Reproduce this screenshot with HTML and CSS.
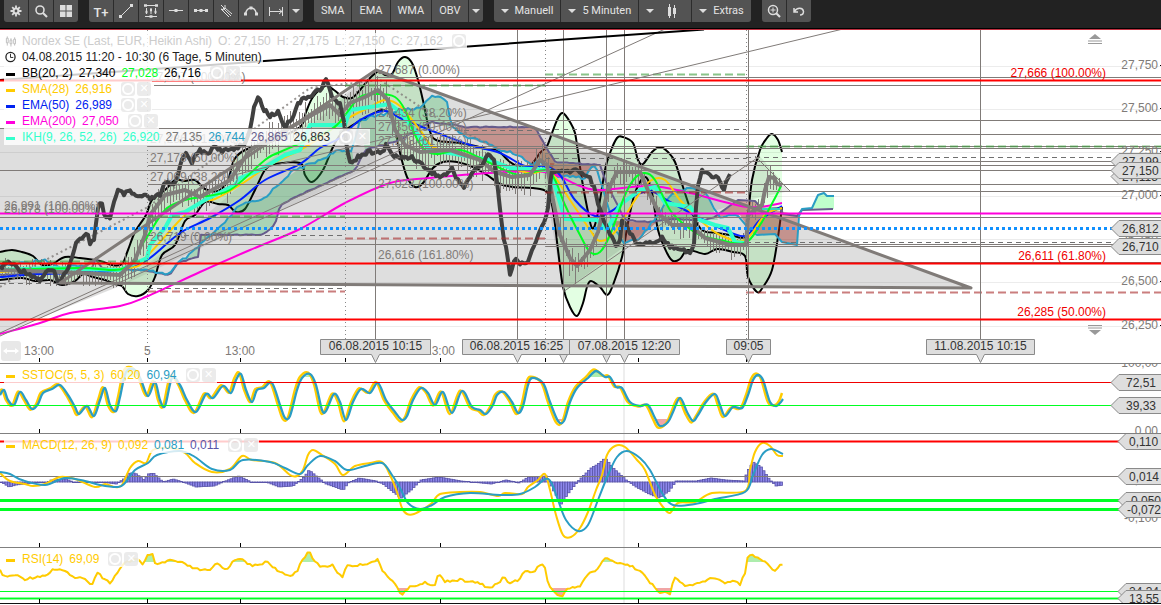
FILE: index.html
```html
<!DOCTYPE html>
<html lang="de">
<head>
<meta charset="utf-8">
<title>Nordex SE – Chart</title>
<link rel="stylesheet" href="styles.css">
</head>
<body>
<header class="toolbar">
  <div class="group">
    <button class="tool" aria-label="Einstellungen"><svg class="ico" viewBox="0 0 14 14"><g stroke="#ddd" stroke-width="1.800"><path d="M7 1.500v11M1.500 7h11M3.200 3.200l7.600 7.600M10.800 3.200l-7.600 7.600"/></g><circle cx="7" cy="7" r="3.500" fill="#ddd"/><circle cx="7" cy="7" r="1.400" fill="#505050"/></svg></button>
    <button class="tool" aria-label="Suche"><svg class="ico" viewBox="0 0 14 14" fill="none" stroke="#ddd"><circle cx="6" cy="6" r="4" stroke-width="1.600"/><path d="M9 9l4 4" stroke-width="2.200"/></svg></button>
    <button class="tool" aria-label="Layout"><svg class="ico" viewBox="0 0 14 14" fill="#ddd"><path d="M1 1h5.500v5.500H1zM7.500 1H13v5.500H7.500zM1 7.500h5.500V13H1zM7.500 7.500H13V13H7.500z"/></svg></button>
  </div>
  <div class="group">
    <button class="tool text-tool" aria-label="Text einfügen">T+</button>
    <button class="tool" aria-label="Linie"><svg class="ico" viewBox="0 0 14 14"><path d="M2 12L12 2" stroke="#ddd"/><path d="M0 11h3v3H0zM11 0h3v3h-3z" fill="#ddd"/></svg></button>
    <button class="tool" aria-label="Fibonacci"><svg class="ico" viewBox="0 0 14 14" stroke="#ddd" fill="none"><path d="M1 1.500h12M1 12.500h12M2.500 4v6M7 4v6M11.500 4v6"/><path d="M1.500 8h2M6 6h2M10.500 8h2M0 1.500h3M11 1.500h3M5.500 12.500h3" stroke-width="2.400"/></svg></button>
    <button class="tool" aria-label="Horizontale"><svg class="ico" viewBox="0 0 14 14"><path d="M0 6.500h14" stroke="#ddd"/><path d="M5.500 5h3v3h-3z" fill="#ddd"/></svg></button>
    <button class="tool" aria-label="Strahl"><svg class="ico" viewBox="0 0 14 14"><path d="M0 6.500h14" stroke="#ddd"/><path d="M0 5h3v3H0zM5.500 5h3v3h-3zM11 5h3v3h-3z" fill="#ddd"/></svg></button>
    <button class="tool" aria-label="Fächer"><svg class="ico" viewBox="0 0 14 14" stroke="#ddd" fill="none"><path d="M2 1l4 4M2 5l3 1M6 1v4M2 5l8 8M4 4l8 8M6 4l7 6"/></svg></button>
    <button class="tool" aria-label="Bogen"><svg class="ico" viewBox="0 0 14 14"><path d="M1.500 10C3 2 11 2 12.500 10" stroke="#ddd" stroke-width="1.500" fill="none"/><path d="M0 8.500h3v3H0zM5.500 2.500h3v3h-3zM11 8.500h3v3h-3z" fill="#ddd"/></svg></button>
    <button class="tool" aria-label="Messen"><svg class="ico" viewBox="0 0 14 14" stroke="#ddd" fill="none"><path d="M.5 3v9M13.500 3v9M1 7.500h12M10 5l3 2.500L10 10"/></svg></button>
    <button class="tool slim" aria-label="Weitere Werkzeuge"><span class="caret"></span></button>
  </div>
  <div class="group">
    <button class="tool word">SMA</button>
    <button class="tool word">EMA</button>
    <button class="tool word">WMA</button>
    <button class="tool word">OBV</button>
    <button class="tool slim" aria-label="Weitere Indikatoren"><span class="caret"></span></button>
  </div>
  <div class="group">
    <button class="tool menu" aria-haspopup="true"><span class="caret"></span>Manuell</button>
    <button class="tool menu" aria-haspopup="true"><span class="caret"></span>5 Minuten</button>
    <button class="tool menu" aria-haspopup="true" aria-label="Darstellung"><span class="caret"></span><svg class="ico wide" viewBox="0 0 24 14"><path d="M9.500 0v14M14.500 1v13" stroke="#ddd"/><path d="M8 3h3v9H8zM13 4h3v6h-3z" fill="#ddd"/></svg></button>
    <button class="tool menu" aria-haspopup="true"><span class="caret"></span>Extras</button>
  </div>
  <div class="group">
    <button class="tool" aria-label="Zoom"><svg class="ico" viewBox="0 0 14 14" fill="none" stroke="#ddd"><circle cx="6" cy="6" r="4.500" stroke-width="1.500"/><path d="M9 9l4 4" stroke-width="2.200"/><path d="M3.500 6h5M6 3.500v5"/></svg></button>
    <button class="tool" aria-label="Rückgängig"><svg class="ico" viewBox="0 0 14 14" fill="none" stroke="#ddd" stroke-width="1.500"><path d="M2 4v4h4M2.500 7.500C5 3 11 3.500 11.500 7.500c0 2-1.500 3.500-3.500 3.500"/></svg></button>
  </div>
</header>

<main class="charts">
  <section class="panel price" aria-label="Kurs">
    <svg class="plot"><g id="price" transform="translate(0,-29)"></g></svg>
    <svg class="axis"><g id="priceAxis" transform="translate(-1001,-29)"></g></svg>
    <div class="legend">
      <div class="row faded">
        <svg class="mark" viewBox="0 0 12 12" stroke="#bbb" fill="#fff"><path d="M2.500 1v10M6.500 3v9M10.500 2v9"/><path d="M1.500 3h2v5h-2zM5.500 5h2v4h-2zM9.500 4h2v5h-2z"/></svg>
        <span>Nordex SE (Last, EUR, Heikin Ashi)</span><span>O: 27,150</span><span>H: 27,175</span><span>L: 27,150</span><span>C: 27,162</span>
        <span class="acts"><button class="act opt" aria-label="Optionen"></button></span>
      </div>
      <div class="row">
        <svg class="mark" viewBox="0 0 12 12" stroke="#222" fill="none"><circle cx="6" cy="6" r="5" stroke-width="1.400"/><path d="M6 2.500V6.500h3"/></svg>
        <span>04.08.2015 11:20 - 10:30 (6 Tage, 5 Minuten)</span>
      </div>
      <div class="row black"><i class="dash"></i><span>BB(20, 2)</span><span>27,340</span><span class="lime">27,028</span><span>26,716</span><span class="acts"><button class="act opt" aria-label="Optionen"></button><button class="act del" aria-label="Entfernen"></button></span></div>
      <div class="row yellow"><i class="dash"></i><span>SMA(28)</span><span>26,916</span><span class="acts"><button class="act opt" aria-label="Optionen"></button><button class="act del" aria-label="Entfernen"></button></span></div>
      <div class="row blue"><i class="dash"></i><span>EMA(50)</span><span>26,989</span><span class="acts"><button class="act opt" aria-label="Optionen"></button><button class="act del" aria-label="Entfernen"></button></span></div>
      <div class="row pink"><i class="dash"></i><span>EMA(200)</span><span>27,050</span><span class="acts"><button class="act opt" aria-label="Optionen"></button><button class="act del" aria-label="Entfernen"></button></span></div>
      <div class="row aqua"><i class="dash"></i><span>IKH(9, 26, 52, 26)</span><span>26,920</span><span class="gray">27,135</span><span class="teal">26,744</span><span class="plum">26,865</span><span class="dark">26,863</span><span class="acts"><button class="act opt" aria-label="Optionen"></button><button class="act del" aria-label="Entfernen"></button></span></div>
    </div>
    <button class="scroll up" aria-label="Nach oben"><svg viewBox="0 0 14 10"><path d="M7 0l6 5H1z" fill="#999"/><path d="M0 7h14M0 9.500h14" stroke="#999"/></svg></button>
    <button class="scroll down" aria-label="Nach unten"><svg viewBox="0 0 14 10"><path d="M7 10l6-5H1z" fill="#999"/><path d="M0 .5h14M0 3h14" stroke="#999"/></svg></button>
    <button class="fit" aria-label="Breite anpassen"><svg viewBox="0 0 20 20"><path d="M2 10l4-3v2h8V7l4 3-4 3v-2H6v2z" fill="#fff"/></svg></button>
  </section>
  <section class="panel stoch" aria-label="Stochastik">
    <svg class="plot"><g id="stoch" transform="translate(0,-364)"></g></svg>
    <svg class="axis"><g id="stochAxis" transform="translate(-1001,-364)"></g></svg>
    <div class="legend"><div class="row yellow"><i class="dash"></i><span>SSTOC(5, 5, 3)</span><span>60,20</span><span class="teal">60,94</span><span class="acts"><button class="act opt" aria-label="Optionen"></button><button class="act del" aria-label="Entfernen"></button></span></div></div>
  </section>
  <section class="panel macd" aria-label="MACD">
    <svg class="plot"><g id="macd" transform="translate(0,-434)"></g></svg>
    <svg class="axis"><g id="macdAxis" transform="translate(-1001,-434)"></g></svg>
    <div class="legend"><div class="row yellow"><i class="dash"></i><span>MACD(12, 26, 9)</span><span>0,092</span><span class="teal">0,081</span><span class="violet">0,011</span><span class="acts"><button class="act opt" aria-label="Optionen"></button><button class="act del" aria-label="Entfernen"></button></span></div></div>
  </section>
  <section class="panel rsi" aria-label="RSI">
    <svg class="plot"><g id="rsi" transform="translate(0,-548)"></g></svg>
    <svg class="axis"><g id="rsiAxis" transform="translate(-1001,-548)"></g></svg>
    <div class="legend"><div class="row yellow"><i class="dash"></i><span>RSI(14)</span><span>69,09</span><span class="acts"><button class="act opt" aria-label="Optionen"></button><button class="act del" aria-label="Entfernen"></button></span></div></div>
  </section>
</main>
<script src="chart.js"></script>
</body>
</html>
```
FILE: styles.css
```css
* { box-sizing: border-box; }
body {
  margin: 0;
  background: #fff;
  font-family: "Liberation Sans", Arial, sans-serif;
  font-size: 12px;
  color: #222;
  overflow: hidden;
}
button { font: inherit; border: 0; padding: 0; margin: 0; cursor: pointer; }

.toolbar {
  display: flex;
  gap: 11px;
  height: 29px;
  padding: 0 4px;
  background: #222;
  border-bottom: 1px solid #000;
}
.group {
  display: flex;
  gap: 1px;
  height: 22px;
  border-radius: 0 0 3px 3px;
  overflow: hidden;
  background: #2c2c2c;
}
.tool {
  display: flex;
  align-items: center;
  justify-content: center;
  width: 24px;
  height: 22px;
  background: #535353;
  color: #e4e4e4;
  font-family: Roboto, "Liberation Sans", sans-serif;
  font-size: 11px;
  line-height: 20px;
}
.text-tool { font-size: 13px; font-weight: 500; padding-top: 3px; }
.slim { width: 14px; }
.word { width: auto; padding: 0 7px; }
.menu { width: auto; gap: 6px; padding: 0 7px; }
.ico { width: 14px; height: 14px; }
.ico.wide { width: 24px; }
.caret {
  border: 4px solid transparent;
  border-top-color: #ddd;
  border-bottom: 0;
}

.charts { display: flex; flex-direction: column; }
.panel {
  position: relative;
  border-bottom: 1px solid #808080;
  overflow: hidden;
}
.price { height: 335px; }
.stoch { height: 70px; }
.macd { height: 114px; }
.rsi { height: 56px; border-bottom: 1px solid #111; }
.plot { display: block; width: 100%; height: 100%; }
.axis { position: absolute; top: 0; right: 0; width: 160px; height: 100%; }

.legend {
  position: absolute;
  top: 4px;
  left: 4px;
  display: flex;
  flex-direction: column;
  align-items: flex-start;
}
.row {
  display: flex;
  align-items: center;
  gap: 6px;
  height: 16px;
  padding: 0 1px;
  line-height: 16px;
  white-space: nowrap;
  background: rgba(255, 255, 255, .8);
}
.mark, .dash { width: 11px; flex: none; }
.mark { height: 12px; }
.dash::before { content: ""; display: block; width: 9px; height: 3px; margin-left: 1px; margin-top: 2px; background: currentColor; }
.acts { display: flex; gap: 2px; padding-left: 3px; }
.act {
  width: 14px;
  height: 14px;
  border-radius: 3px;
  background: rgba(222, 222, 222, .6);
  display: grid;
  place-items: center;
  color: #fff;
}
.opt::before { content: ""; width: 8px; height: 8px; border: 2px solid #fff; border-radius: 50%; }
.del::before { content: "✕"; font: bold 11px/14px "DejaVu Sans", sans-serif; }
.stoch .legend, .macd .legend, .rsi .legend { top: 3px; }
.faded { color: #ccc; }
.black { color: #000; }
.lime { color: #0f2; }
.yellow { color: #ffcb00; }
.blue { color: #0022f0; }
.pink { color: #ff00dc; }
.aqua { color: #33ffcc; }
.gray { color: #777; }
.teal { color: #2a9dc4; }
.plum { color: #665c8c; }
.violet { color: #5954a8; }
.dark { color: #333; }

.scroll { position: absolute; right: 59px; width: 14px; height: 10px; background: none; }
.scroll svg, .fit svg { display: block; width: 100%; height: 100%; }
.up { top: 5px; }
.down { top: 296px; }
.fit { position: absolute; left: 1px; bottom: 2px; width: 20px; height: 20px; border-radius: 3px; background: #e8e8e8; }

svg text { font-family: "Liberation Sans", Arial, sans-serif; font-size: 12px; fill: #807b78; }
svg .tag { fill: #333; }
svg .fib { fill: #f00000; text-anchor: end; }
svg .num { text-anchor: end; }
```
FILE: chart.js
```js
const NS = 'http://www.w3.org/2000/svg';
const FAR = 4000;
const GREY = '#807b78';
let host;

function into(id) { host = document.getElementById(id); }
function add(tag, attrs, text) {
  const e = document.createElementNS(NS, tag);
  for (const k in attrs) e.setAttribute(k, attrs[k]);
  if (text) e.textContent = text;
  host.appendChild(e);
  return e;
}
function pts(s) {
  const n = s.trim().split(/[\s,]+/).map(Number), out = [];
  for (let i = 0; i < n.length; i += 2) out.push([n[i], n[i + 1]]);
  return out;
}
function curve(p) {
  let d = 'M' + p[0];
  for (let i = 0; i < p.length - 1; i++) {
    const a = p[i - 1] || p[i], b = p[i], c = p[i + 1], e = p[i + 2] || c;
    d += `C${b[0] + (c[0] - a[0]) / 6},${b[1] + (c[1] - a[1]) / 6} ${c[0] - (e[0] - b[0]) / 6},${c[1] - (e[1] - b[1]) / 6} ${c[0]},${c[1]}`;
  }
  return d;
}
function at(p, x) {
  for (let i = 1; i < p.length; i++) {
    if (x <= p[i][0]) {
      const [x0, y0] = p[i - 1], [x1, y1] = p[i];
      return y0 + (y1 - y0) * (x - x0) / ((x1 - x0) || 1);
    }
  }
  return p[p.length - 1][1];
}
function noise(i) { const v = Math.sin(i * 12.9898) * 43758.5453; return v - Math.floor(v); }
function rough(p, step, amp) {
  const out = [];
  for (let x = p[0][0], i = 0; x <= p[p.length - 1][0]; x += step, i++) out.push([x, at(p, x) + (noise(i) - 0.5) * amp]);
  return out;
}
function line(x1, y1, x2, y2, color, w, dash, op) {
  const a = { x1, y1, x2, y2, stroke: color, 'stroke-width': w || 1 };
  if (dash) a['stroke-dasharray'] = dash;
  if (op) a['stroke-opacity'] = op;
  return add('line', a);
}
function stroke(d, color, w, op, dash) {
  const a = { d, fill: 'none', stroke: color, 'stroke-width': w, 'stroke-linejoin': 'round', 'stroke-opacity': op || 1 };
  if (dash) a['stroke-dasharray'] = dash;
  return add('path', a);
}
function area(s, fill) { add('polygon', { points: s, fill }); }
function label(x, y, t, c) { add('text', { x, y, class: c || '' }, t); }
function halo(y, color) { line(0, y, FAR, y, color, 3, null, 0.5); line(0, y, FAR, y, color, 1); }
function flag(x, y, t, pad) {
  add('path', { d: `M${x},${y}l8,-8H1170v16H${x + 8}z`, fill: '#dedede', stroke: '#8a8a8a', 'stroke-width': 1 });
  label(x + (pad || 11), y + 4, t, 'tag');
}
const TICKS = [39.5, 147.5, 240.5, 345.5, 440.5, 545.5, 638.5, 746.5];
function ticks(y) { TICKS.forEach(x => line(x, y - 4, x, y, '#000')); }

/* price panel */
into('price');
[66, 109, 152, 196, 239, 282, 326].forEach(y => line(0, y + .5, FAR, y + .5, '#ececec'));
area('0,128 300,128 376,70 971,288 125,284 0,334', 'rgba(60,60,60,.17)');
area('540,153 757,153 790,191 748,200 640,235 563,292', 'rgba(60,60,60,.12)');
area('125,284 376,70 376,165', 'rgba(60,60,60,.10)');

const upper = pts('0,252 12,250 22,252 33,256 42,265 52,264 65,257 80,258 100,261 112,265 122,264 128,250 135,232 146,215 152,200 165,190 175,180 185,181 195,180 205,189 218,191 228,180 234,160 245,150 270,142 300,127 306,112 313,97 325,86 334,90 343,97 352,98 360,90 370,78 379,71 385,75 392,74 398,62 405,57 412,63 418,80 424,105 429,128 436,140 460,143 475,146 487,149 497,150 510,162 520,167 530,166 540,153 547,146 552,133 558,118 563,113 570,122 575,133 578,153 582,180 587,207 592,228 597,217 605,170 610,153 617,138 623,137 633,143 638,160 643,164 652,152 660,147 668,152 675,162 683,187 692,213 702,230 717,233 730,235 745,237 748,217 752,180 760,150 767,138 772,134 778,140 782,152');
const lower = pts('0,280 22,278 35,281 50,280 62,285 75,281 83,274 93,277 105,280 115,284 122,286 128,294 138,296 148,290 155,277 162,255 175,245 185,221 195,215 205,202 218,204 228,205 236,212 245,209 255,190 265,170 275,164 300,163 305,175 312,182 323,170 333,147 343,132 367,117 383,110 393,120 400,153 407,177 415,187 423,183 433,168 443,162 457,162 473,167 487,175 500,184 513,187 533,188 547,192 553,210 558,250 563,287 570,307 577,316 583,303 587,287 591,281 600,287 607,295 613,285 622,257 628,223 635,193 645,177 652,193 658,230 667,253 673,261 680,259 688,250 705,254 717,249 733,252 745,256 748,277 757,292 763,287 772,270 778,237 782,207');
add('path', { d: curve(upper) + curve(lower.slice().reverse()).replace('M', 'L') + 'Z', fill: 'rgba(0,255,0,.11)' });
stroke(curve(upper), '#000', 2);
stroke(curve(lower), '#000', 2);

/* ichimoku cloud */
const UP = 'rgba(50,190,90,.3)', DOWN = 'rgba(165,55,45,.45)';
area('170,275 178,263 190,255 205,240 220,228 240,205 262,200 280,183 300,168 335,152 352,150 355,170 315,188 300,195 280,205 275,225 262,235 200,235 198,257 178,263', UP);
area('360,120 400,110 420,108 428,98 440,95 447,102 452,128 430,122 400,140 365,150', UP);
area('655,220 660,212 670,195 690,187 705,192 718,220', UP);
area('802,208 812,208 818,195 824,193 826,196 834,196 834,209', 'rgba(0,255,50,.25)');
area('460,127 535,127 545,145 555,162 550,175 540,160 530,165 520,155 500,150 470,138 452,128', DOWN);
area('550,163 600,165 592,168 585,178 550,175', DOWN);
area('613,221 657,222 650,228 640,238 625,243', DOWN);
area('715,217 740,200 755,202 762,207 798,215 797,245 785,243 775,235 760,235 750,230 740,215', DOWN);
stroke('M' + rough(pts('0,275 90,272 97,256 100,268 140,270 170,275 178,263 198,257 200,235 262,235 275,225 280,205 300,195 315,188 355,170 365,150 400,140 430,122 455,125 465,127 535,127 545,145 555,162 600,165 605,180 625,220 650,222 670,219 705,220 715,217'), 3, 1).join('L') + 'L738,200L755,201L762,209L780,208L783,214L797,216L802,210L833,209', '#665c8c', 2);
stroke('M' + rough(pts('0,266 30,262 44,259 60,268 75,266 100,270 140,270 170,274 178,263 190,255 205,240 220,228 240,205 262,200 280,183 290,173 300,168 320,160 335,152 352,150 360,120 400,110 420,108 428,98 440,95 447,102 452,128 470,138 480,140 500,150 520,155 530,165 540,160 550,175 585,178 592,165 597,170 603,190 615,230 625,243 640,238 650,225 660,212 670,195 690,187 705,192 715,210 720,217 740,215'), 3, 3).join('L') + 'L750,230L757,235L775,234L782,242L797,245L799,216L802,209L812,208L818,195L824,193L827,196L834,196', '#2a9dc4', 2);

/* price bars along the conversion line */
const base = pts('0,270 60,272 120,275 135,260 145,235 150,215 165,195 185,190 200,197 230,180 250,150 300,122 312,115 330,105 340,115 350,103 365,97 378,90 388,100 395,130 405,145 420,152 450,150 480,160 495,172 512,177 530,175 540,160 547,165 553,200 560,235 570,258 577,266 590,250 598,232 608,190 617,172 640,172 650,195 660,215 672,225 690,225 705,238 730,245 746,245 748,215 762,205 765,190 769,177 774,178 777,184 782,185');
let wicks = '';
for (let x = 2, i = 0; x < 782; x += 3, i++) {
  const y = at(base, x), s = x > 120 && x < 580 ? 1 : .7;
  wicks += `M${x + .5},${Math.round(y - (4 + noise(i) * 14) * s)}V${Math.round(y + (5 + noise(i + 900) * 16) * s)}`;
}
stroke(wicks, '#807b78', 1);

stroke(curve(pts('0,334 40,323 70,313 120,306 148,296 200,272 250,250 300,229 345,203 390,183 430,178 490,173 545,172 580,186 600,190 650,186 690,193 748,207 782,203')), '#ff00dc', 2);
stroke(curve(pts('0,277 40,274 100,272 130,268 150,258 180,233 210,218 240,200 265,180 300,164 320,148 340,138 360,120 385,111 400,118 430,130 470,145 500,153 525,166 545,166 560,175 575,200 595,216 610,212 630,198 650,191 670,202 700,218 720,228 745,236 760,220 782,206')), '#0022ff', 2);
stroke(curve(pts('0,272 60,268 130,268 148,255 180,220 200,202 215,199 240,185 270,165 300,150 320,138 345,120 370,107 385,100 400,106 420,130 435,148 470,155 500,165 530,173 550,172 570,200 590,230 600,241 615,232 635,200 650,181 665,180 680,200 700,220 720,235 745,240 765,215 782,208')), '#ffcb00', 2);
stroke('M' + pts('0,270 50,268 120,270 147,258 150,245 165,228 172,215 185,212 205,200 235,185 240,178 260,170 285,155 300,150 310,125 345,125 350,110 390,104 400,112 430,150 455,154 490,160 510,168 550,170 565,219 597,220 607,230 620,205 640,190 655,187 665,203 690,207 700,220 715,225 728,228 735,242 745,243').join('L'), '#33ffcc', 4);
stroke('M762,209H780', '#33d8b8', 2);
stroke(curve(pts('0,270 80,268 125,268 145,240 165,210 185,200 200,197 230,190 265,160 280,152 330,130 345,115 360,97 378,94 395,97 405,110 415,135 425,150 437,154 460,150 480,158 500,168 520,175 545,170 555,180 565,205 580,235 590,252 600,252 610,235 625,195 635,178 645,173 655,180 670,210 685,225 700,235 720,240 745,243 760,225 775,198 781,186')), '#0f2', 2);
stroke('M' + base.join('L'), '#807d7a', 4);
stroke('M0,287L30,268L148,207L310,88L380,80L440,120L500,150', '#807b78', 2, .8, '2 3');

const lag = pts('0,268 8,262 14,265 20,270 26,272 33,276 40,280 46,272 53,270 58,283 62,277 68,270 73,252 77,240 82,237 88,234 90,243 94,240 96,225 98,210 101,201 105,217 110,217 114,203 118,191 124,194 130,192 137,197 145,196 150,199 160,195 165,183 175,185 180,165 186,152 192,162 200,150 207,155 215,145 222,152 235,148 247,142 252,120 255,102 259,97 264,110 270,116 278,112 285,127 292,118 298,103 306,98 315,92 322,88 326,79 332,96 340,105 344,120 347,150 351,165 358,156 370,152 383,153 387,143 392,155 400,158 412,157 420,163 430,171 440,177 446,174 452,169 456,177 464,187 470,177 476,168 483,164 488,155 494,158 498,190 503,235 508,258 510,273 515,259 521,265 528,260 533,250 538,235 543,225 547,215 549,200 551,170 556,172 565,172 575,170 585,174 590,178 594,188 600,210 606,225 611,236 616,245 620,240 622,220 628,228 635,242 645,243 655,242 662,237 670,246 680,248 690,253 694,245 695,220 698,185 702,170 710,175 718,178 724,190 728,177 731,175');
stroke('M' + rough(lag, 2, 4).join('L'), '#404040', 4);

/* horizontal levels */
[[128, 0, 376], [170, 0, FAR], [217, 0, FAR], [85, 154, FAR], [146, 148, FAR], [165, 148, FAR], [184, 148, FAR], [244, 148, FAR], [77, 376, FAR], [120, 376, FAR], [134, 376, FAR], [148, 376, FAR], [161, 748, FAR], [191, 563, FAR], [246, 545, FAR], [153, 545, 757], [262, 376, FAR]]
  .forEach(([y, a, b]) => line(a, y + .5, b, y + .5, GREY));
[[85, 345, 545], [74, 545, 746], [146, 746, FAR], [216, 148, 345], [261, 0, 148]].forEach(([y, a, b]) => line(a, y + .5, b, y + .5, '#3a9c3a', 2, '8 4', .6));
[[291, 148, 345], [238, 345, 545], [192, 545, 746], [292, 746, FAR]].forEach(([y, a, b]) => line(a, y + .5, b, y + .5, '#a82828', 2, '8 4', .6));
[[235, 148, 345], [288, 148, 345], [283, 0, 148], [130, 455, 545], [129, 545, 746], [158, 545, 746], [157, 746, FAR], [242, 746, FAR]].forEach(([y, a, b]) => line(a, y + .5, b, y + .5, '#707070', 1, '5 4'));
[147.5, 345.5, 545.5, 746.5].forEach(x => line(x, 30, x, 352, '#888', 1, '1 3'));
[375.5, 517.5, 563.5, 606.5, 624.5, 748.5, 980.5].forEach(x => line(x, 29, x, 345, GREY));
line(0, 333, 665, 29, GREY);
line(0, 336, 400, 157, GREY);
line(230, 176, 843, 29, GREY);
line(563, 292, 760, 156, GREY);
line(755, 156, 790, 191, GREY);
line(0, 80, 704, 29.500, '#000', 2);
stroke('M60,283L376,70L971,288Z', '#807b78', 3);
halo(80.5, '#ff0000'); halo(263.5, '#ff0000'); halo(319.5, '#ff0000'); halo(213.5, '#ff00dc');
line(0, 228.5, FAR, 228.5, '#1090ff', 3, '3 3');
line(0, 29.5, FAR, 29.5, '#c03040');

[[378, 74, '27,687 (0.00%)'], [378, 117, '27,434 (38.20%)'], [378, 131, '27,356 (50.00%)'], [378, 145, '27,278 (61.80%)'], [378, 188, '27,023 (100.00%)'], [378, 259, '26,616 (161.80%)'], [150, 81, '27,637 (100.00%)'], [150, 143, '27,286 (61.80%)'], [150, 162, '27,178 (50.00%)'], [150, 181, '27,069 (38.20%)'], [150, 241, '26,719 (0.00%)'], [4, 210, '26,991 (100.00%)'], [4, 213, '26,878 (100.00%)'],
  [24, 355, '13:00'], [144, 355, '5'], [225, 355, '13:00'], [425, 355, '13:00']].forEach(a => label(...a));
ticks(362);
function timeTag(x, w, tip, t) {
  add('path', { d: `M${x},339.5h${w}v15H${tip + 4}l-4,8l-4,-8H${x}z`, fill: '#dedede', stroke: '#8a8a8a' });
  add('text', { x: x + w / 2, y: 350, 'text-anchor': 'middle', class: 'tag' }, t);
}
timeTag(320.5, 110, 375.5, '06.08.2015 10:15');
timeTag(508.5, 110, 563.5, '');
timeTag(462.5, 108, 517.5, '06.08.2015 16:25');
timeTag(569.5, 98, 606.5, '');
timeTag(569.5, 110, 624.5, '07.08.2015 12:20');
timeTag(726.5, 44, 748.5, '09:05');
timeTag(926.5, 108, 980.5, '11.08.2015 10:15');

into('priceAxis');
[[69, '27,750'], [112, '27,500'], [155, '27,250'], [199, '27,000'], [243, '26,750'], [285, '26,500'], [329, '26,250']].forEach(([y, t]) => {
  label(1158, y, t, 'num'); line(1160, y - 3.5, 1161, y - 3.5, '#000');
});
label(1106, 77, '27,666 (100.00%)', 'fib');
label(1106, 260, '26,611 (61.80%)', 'fib');
label(1106, 316, '26,285 (50.00%)', 'fib');
flag(1111, 176.5, '27,115'); flag(1111, 161.5, '27,199'); flag(1111, 170.5, '27,150');
flag(1111, 228.5, '26,812'); flag(1111, 246.5, '26,710');

/* oscillators */
let clipId = 0;
function zones(p, hi, lo) {
  const d = 'M' + p.join('L');
  [[hi, hi - 100, 'rgba(0,200,0,.32)'], [lo, lo, 'rgba(220,30,30,.4)']].forEach(([y, top, fill]) => {
    const id = 'zone' + clipId++;
    const c = add('clipPath', { id });
    const r = document.createElementNS(NS, 'rect');
    Object.entries({ x: 0, y: top, width: 1000, height: 100 }).forEach(([k, v]) => r.setAttribute(k, v));
    c.appendChild(r);
    add('path', { d: `${d}L${p[p.length - 1][0]},${y}L0,${y}Z`, fill, 'clip-path': `url(#${id})` });
  });
}

into('stoch');
line(624, 364, 624, 434, '#eee', 2);
const st = pts('0,395 4,390 8,400 14,405 20,392 26,400 32,409 38,404 43,393 52,389 60,385 68,395 75,407 79,414 87,406 94,416 100,400 105,388 110,405 116,411 120,397 126,372 135,370 141,380 148,396 155,382 160,400 165,406 172,378 180,385 187,400 196,412 206,394 213,398 223,386 231,393 236,380 241,374 246,390 252,402 257,390 264,388 272,383 280,405 285,418 290,416 297,390 302,378 310,374 316,385 322,410 326,411 334,394 340,402 346,420 353,402 361,389 370,393 378,383 386,400 395,412 402,420 407,416 413,400 421,388 428,393 435,405 443,392 452,413 462,391 472,407 480,410 486,414 493,405 497,395 504,392 512,402 518,413 523,406 528,385 532,378 543,383 550,402 558,421 564,421 570,402 577,388 588,378 596,371 605,377 610,377 616,387 622,388 630,402 640,406 648,405 655,418 660,426 668,422 673,412 680,398 687,412 693,421 698,415 706,402 715,394 720,405 725,416 733,407 742,408 748,395 753,380 758,375 763,380 770,402 776,406 780,403 783,399');
zones(st, 377, 419);
stroke(curve(st.slice(0, -3).map(([x, y]) => [x - 2, 398 + (y - 398) * 1.06]).concat([[775, 405], [779, 401], [782, 393]])), '#ffcb00', 2.5);
stroke(curve(st), '#2a9dc4', 2.3);
line(0, 382.5, FAR, 382.5, '#f00000');
line(0, 405.5, FAR, 405.5, '#0f2');
ticks(433);
into('stochAxis');
label(1158, 367, '100,00', 'num'); label(1158, 435, '0,00', 'num');
flag(1111, 382.5, '72,51', 15); flag(1111, 405.5, '39,33', 15);

into('macd');
line(624, 434, 624, 548, '#eee', 2);
const hist = pts('0,0 8,-5 15,-3 40,0 45,-1 50,2 65,3 72,0 100,0 115,-2 124,4 128,9 134,9 143,2 147,8 152,9 162,0 172,3 182,0 195,-5 213,-4 222,0 232,4 238,6 250,0 265,0 278,-5 292,-4 303,5 308,12 315,6 325,-2 342,-8 347,-1 358,4 375,1 382,-2 392,-10 400,-16 410,-8 420,2 438,5 460,1 490,-2 505,2 518,-1 527,5 545,6 552,-8 560,-22 568,-10 578,2 590,14 597,18 604,24 612,14 625,2 635,-5 648,-12 658,-16 668,-9 675,1 695,1 710,4 725,2 743,1 746,10 752,20 760,15 768,3 775,-4 783,-3');
for (let x = 0; x < 782; x += 2.5) {
  const h = at(hist, x), a = Math.max(Math.abs(h), .6);
  add('rect', { x, y: h > 0 ? 482 - a : 482, width: 2.5, height: a, fill: '#8c86ea', stroke: '#5954a8', 'stroke-width': .8 });
}
line(0, 476.5, FAR, 476.5, GREY);
stroke(curve(pts('0,473 10,481 25,484 33,486 45,484 60,477 75,479 95,487 105,484 115,487 122,485 130,468 138,461 146,463 153,450 170,448 185,453 195,463 212,472 230,469 242,456 252,460 275,463 290,475 297,476 303,470 308,455 313,450 322,455 335,464 343,475 355,466 370,463 382,462 390,475 397,492 402,508 407,514 414,514 425,508 432,503 440,494 460,492 480,492 498,496 505,493 522,494 528,487 538,480 545,474 550,490 556,515 563,535 571,537 580,528 588,512 596,490 602,475 607,455 615,446 625,447 637,460 645,470 655,495 663,507 670,513 678,503 695,502 712,493 745,491 750,470 755,452 762,443 770,446 777,455 783,456')), '#ffcb00', 2);
stroke(curve(pts('0,472 10,474 22,480 45,485 65,478 85,481 100,485 118,487 125,483 135,470 148,463 157,455 180,451 195,457 212,469 230,470 243,460 270,462 285,468 300,474 308,465 320,456 335,461 347,470 365,466 382,463 392,475 400,488 408,503 420,509 432,505 445,497 470,493 500,495 520,494 535,487 545,479 551,482 558,500 566,520 578,531 588,525 598,500 608,475 617,457 627,451 640,458 650,470 662,493 673,505 695,504 715,499 745,492 753,475 762,455 771,449 783,454')), '#2a9dc4', 2);
halo(441.5, '#ff0000');
line(0, 500.5, FAR, 500.5, '#0f2', 3);
line(0, 509.5, FAR, 509.5, '#0f2', 3);
ticks(547);
into('macdAxis');
label(1158, 484, '0,000', 'num'); label(1158, 522, '-0,100', 'num');
flag(1118, 441.5, '0,110'); flag(1118, 476.5, '0,014'); flag(1118, 500.5, '-0,050', 9); flag(1118, 509.5, '-0,072', 9);

into('rsi');
line(624, 548, 624, 604, '#eee', 2);
const rs = rough(pts('0,571 5,577 15,575 25,579 40,576 48,575 52,569 65,571 70,576 82,578 92,584 98,571 103,578 110,583 118,572 125,563 138,558 143,566 147,556 153,555 156,566 170,560 182,563 195,569 210,571 216,563 228,570 233,560 240,558 247,564 257,566 267,561 280,573 290,576 297,571 303,558 309,552 315,562 322,567 332,565 342,578 346,566 360,565 372,562 377,559 382,570 392,580 402,595 410,587 425,583 435,585 438,574 445,581 460,580 478,583 490,588 500,582 504,576 508,583 518,580 524,572 535,571 540,564 545,567 548,584 555,593 562,597 568,588 580,586 588,574 597,570 604,558 612,561 625,564 640,570 650,583 660,592 670,594 674,577 685,586 705,582 712,577 725,583 733,580 740,584 745,574 747,557 753,555 762,560 770,566 775,571 780,565 783,565'), 2.5, 2.5);
zones(rs, 562, 588);
stroke('M' + rs.join('L'), '#ffcb00', 2);
line(0, 591.5, FAR, 591.5, '#0f2');
line(0, 598.5, FAR, 598.5, '#0f2', 3, null, .45);
line(0, 598.5, FAR, 598.5, '#0f2');
ticks(603);
into('rsiAxis');
flag(1118, 591.5, '24,34'); flag(1118, 598.5, '13,55');
```
